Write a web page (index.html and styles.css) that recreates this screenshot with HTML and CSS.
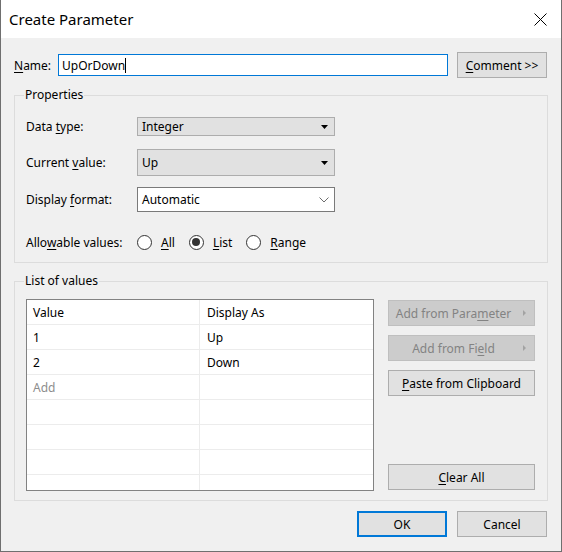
FILE: index.html
```html
<!DOCTYPE html>
<html lang="en">

<head>
	<meta charset="UTF-8"/>
	<title>Create Parameter</title>
	<link rel="stylesheet" href="styles.css">
</head>

<body>
<div class="dialog">
	<div class="titlebar">
		<span class="title">Create Parameter</span>
		<svg class="close" width="13" height="13" viewBox="0 0 13 13">
			<path d="M0.5 0.5L12.5 12.5M12.5 0.5L0.5 12.5" stroke="#000" stroke-width="1"/>
		</svg>
	</div>
	<div class="content">
		<div class="name-row">
			<span class="name-label"><u>N</u>ame:</span>
			<div class="textbox">UpOrDown<span class="caret"></span></div>
			<button class="btn comment"><u>C</u>omment &gt;&gt;</button>
		</div>

		<fieldset class="group props">
			<legend>Properties</legend>
			<div class="prop-row r1">
				<span class="prop-label">Data <u>t</u>ype:</span>
				<div class="combo">
					<span>Integer</span>
					<svg width="7" height="4" viewBox="0 0 7 4"><path d="M0 0H7L3.5 4Z" fill="#000"/></svg>
				</div>
			</div>
			<div class="prop-row r2">
				<span class="prop-label">Current <u>v</u>alue:</span>
				<div class="combo">
					<span>Up</span>
					<svg width="7" height="4" viewBox="0 0 7 4"><path d="M0 0H7L3.5 4Z" fill="#000"/></svg>
				</div>
			</div>
			<div class="prop-row r3">
				<span class="prop-label">Display <u>f</u>ormat:</span>
				<div class="combo edit">
					<span>Automatic</span>
					<svg width="10" height="6" viewBox="0 0 10 6"><path d="M0.5 0.5L5 5L9.5 0.5" fill="none" stroke="#6d6d6d" stroke-width="1"/></svg>
				</div>
			</div>
			<div class="prop-row r4">
				<span class="prop-label">Allo<u>w</u>able values:</span>
				<span class="radio"><span class="dot"></span><u>A</u>ll</span>
				<span class="radio checked"><span class="dot"></span><u>L</u>ist</span>
				<span class="radio"><span class="dot"></span><u>R</u>ange</span>
			</div>
		</fieldset>

		<fieldset class="group values">
			<legend>List of values</legend>
			<div class="list-body">
				<div class="grid">
					<div class="grid-row"><span class="cell">Value</span><span class="cell">Display As</span></div>
					<div class="grid-row"><span class="cell">1</span><span class="cell">Up</span></div>
					<div class="grid-row"><span class="cell">2</span><span class="cell">Down</span></div>
					<div class="grid-row"><span class="cell add">Add</span><span class="cell"></span></div>
					<div class="grid-row"><span class="cell"></span><span class="cell"></span></div>
					<div class="grid-row"><span class="cell"></span><span class="cell"></span></div>
					<div class="grid-row"><span class="cell"></span><span class="cell"></span></div>
					<div class="grid-row"><span class="cell"></span><span class="cell"></span></div>
				</div>
				<div class="side">
					<button class="btn disabled">Add from Para<u>m</u>eter<span class="sub"></span></button>
					<button class="btn disabled">Add from Fi<u>e</u>ld<span class="sub"></span></button>
					<button class="btn"><u>P</u>aste from Clipboard</button>
					<button class="btn clear"><u>C</u>lear All</button>
				</div>
			</div>
		</fieldset>

		<div class="footer">
			<button class="btn ok">OK</button>
			<button class="btn">Cancel</button>
		</div>
	</div>
</div>
</body>

</html>
```

FILE: styles.css
```css
* {
	box-sizing: border-box;
}

body {
	margin: 0;
	font-family: "Segoe UI", "Noto Sans", sans-serif;
	font-size: 12px;
	color: #000;
}

u {
	text-decoration-thickness: 1px;
	text-underline-offset: 2px;
}

.dialog {
	width: 562px;
	height: 552px;
	background: #f0f0f0;
	border: 1px solid #6f6f6f;
	border-top: none;
	display: flex;
	flex-direction: column;
}

.titlebar {
	height: 38px;
	background: #fff;
	display: flex;
	align-items: center;
	justify-content: space-between;
	padding: 0 14px 0 8px;
}

.title {
	font-size: 15px;
}

.content {
	padding: 14px 13px 0 13px;
}

.name-row {
	display: flex;
	align-items: center;
	height: 26px;
}

.name-label {
	width: 44px;
}

.textbox {
	width: 390px;
	height: 22px;
	border: 1px solid #0078d7;
	background: #fff;
	padding-left: 3px;
	display: flex;
	align-items: center;
}

.caret {
	width: 1px;
	height: 15px;
	background: #000;
}

.btn {
	font: inherit;
	color: #000;
	background: #e1e1e1;
	border: 1px solid #adadad;
	padding: 0;
	height: 26px;
	position: relative;
}

.comment {
	width: 90px;
	margin-left: 9px;
}

.group {
	width: 534px;
	min-width: 0;
	margin: 9px 0 0;
	border: 1px solid #dcdcdc;
}

.group legend {
	margin-left: -2px;
	padding: 0 1px;
	line-height: 16px;
}

.props {
	padding: 14px 11px 10px;
}

.prop-row {
	display: flex;
	align-items: center;
}

.r1 {
	height: 19px;
}

.r2 {
	height: 27px;
	margin-top: 13px;
}

.r3 {
	height: 25px;
	margin-top: 11px;
}

.r4 {
	height: 20px;
	margin-top: 20px;
}

.prop-label {
	width: 111px;
}

.combo {
	width: 198px;
	height: 100%;
	background: #e1e1e1;
	border: 1px solid #adadad;
	display: flex;
	align-items: center;
	justify-content: space-between;
	padding: 0 6px 0 4px;
}

.combo.edit {
	background: #fff;
	border-color: #7a7a7a;
	padding-right: 5px;
}

.radio {
	display: flex;
	align-items: center;
	margin-right: 14px;
}

.radio .dot {
	width: 15px;
	height: 15px;
	border: 1px solid #333;
	border-radius: 50%;
	background: #fff;
	margin-right: 9px;
	display: flex;
	align-items: center;
	justify-content: center;
}

.radio.checked .dot::after {
	content: "";
	width: 8px;
	height: 8px;
	border-radius: 50%;
	background: #333;
}

.values {
	margin-top: 10px;
	padding: 10px 11px 9px;
}

.list-body {
	display: flex;
	justify-content: space-between;
}

.grid {
	width: 348px;
	height: 192px;
	border: 1px solid #828282;
	background: #fff;
	overflow: hidden;
}

.grid-row {
	display: flex;
	height: 25px;
	border-bottom: 1px solid #ececec;
}

.cell {
	display: flex;
	align-items: center;
	padding-top: 1px;
}

.cell:first-child {
	width: 173px;
	padding-left: 6px;
	border-right: 1px solid #ececec;
}

.cell:last-child {
	padding-left: 7px;
}

.cell.add {
	color: #8d8d8d;
}

.side {
	width: 147px;
	display: flex;
	flex-direction: column;
	padding: 1px 0;
	margin-right: 1px;
}

.side .btn + .btn {
	margin-top: 9px;
}

.side .clear {
	margin-top: auto !important;
}

.btn.disabled {
	background: #cccccc;
	border-color: #bfbfbf;
	color: #838383;
	padding-right: 16px;
}

.sub {
	position: absolute;
	right: 8px;
	top: 9px;
	width: 0;
	height: 0;
	border-top: 3px solid transparent;
	border-bottom: 3px solid transparent;
	border-left: 3px solid #a3a3a3;
}

.footer {
	display: flex;
	justify-content: flex-end;
	gap: 10px;
	margin-top: 10px;
	padding-right: 1px;
}

.footer .btn {
	width: 90px;
}

.footer .ok {
	border: 2px solid #0078d7;
}
```
